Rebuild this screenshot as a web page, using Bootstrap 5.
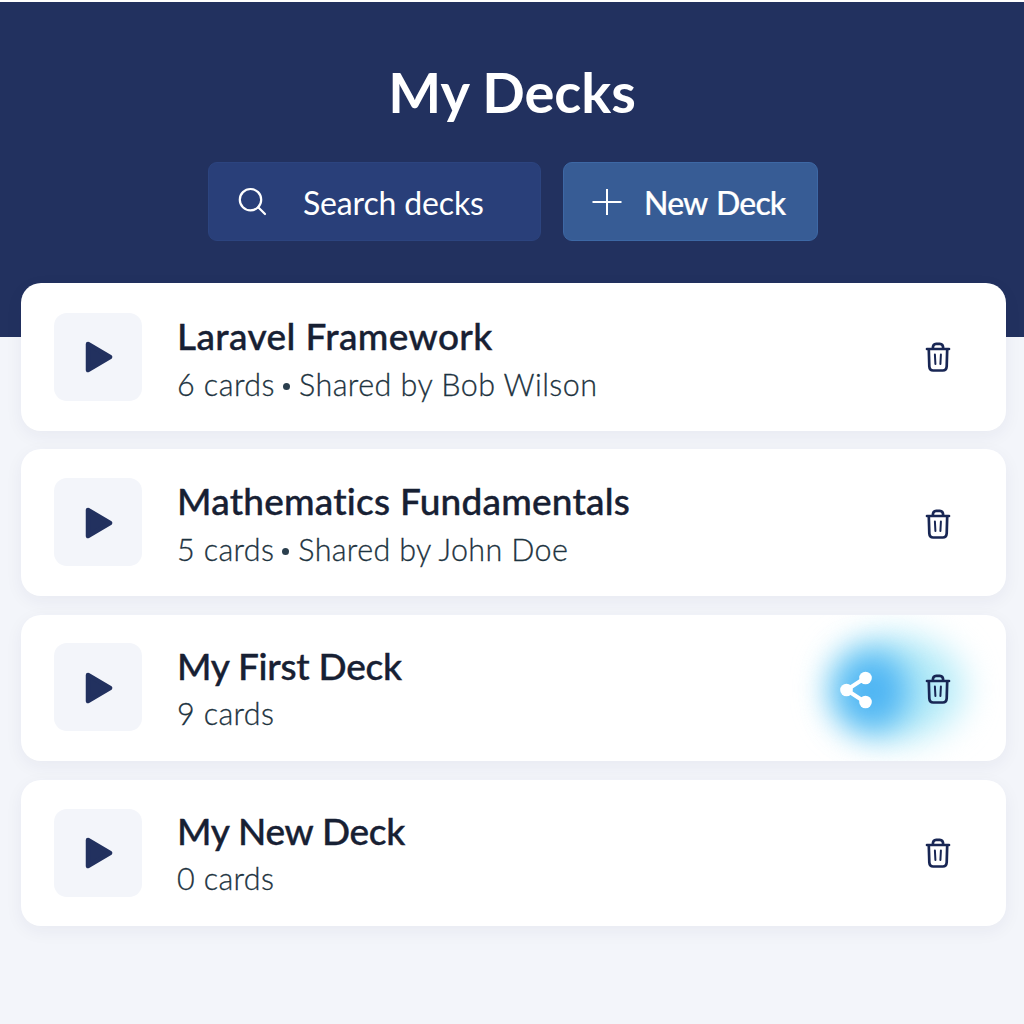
<!DOCTYPE html>
<html lang="en">
<head>
<meta charset="utf-8">
<meta name="viewport" content="width=device-width, initial-scale=1">
<title>My Decks</title>
<link href="https://cdn.jsdelivr.net/npm/bootstrap@5.3.0/dist/css/bootstrap.min.css" rel="stylesheet">
<style>
  body { font-family: Lato, "Open Sans", sans-serif; background: #f3f5fa; min-height: 1024px; overflow: hidden; font-variant-ligatures: none; }
  .deck-header { height: 337px; background: #22315f; border-top: 2px solid #fff; padding-top: 60px; }
  .page-title { font-size: 56px; font-weight: 700; line-height: 60px; margin-bottom: 40px; }
  .tool-row { gap: 22px; padding-left: 2px; }
  .tool-btn { height: 79px; border-radius: 9px; font-size: 32px; line-height: 40px; color: #fff; border: 1px solid transparent; }
  .tool-search { width: 333px; background: #293f79; border-color: #2c447f; padding: 2px 0 0 29px; gap: 35px; letter-spacing: -.15px; }
  .tool-new { width: 255px; background: #375c95; border-color: #3d68a5; padding: 2px 0 0 28px; gap: 22px; font-weight: 500; letter-spacing: -.85px; word-spacing: 2px; -webkit-text-stroke: .2px #fff; }
  .tool-new span { margin-right: -4px; }
  .tool-btn:hover { color: #fff; }
  .tool-btn svg { margin-top: -2px; }
  .deck-list { margin-top: -54px; padding: 0 18px 0 21px; gap: 18px; position: relative; }
  .deck-item { height: 147px; border: 0; border-radius: 20px; padding: 29px 51px 0 33px; box-shadow: 0 5px 18px rgba(40, 45, 90, .055); }
  .deck-item:first-child { height: 148px; padding-top: 30px; }
  .deck-item:nth-child(3) { padding-top: 28px; }
  .deck-item:nth-child(n+3) { height: 146px; margin-top: 1px; }
  .play-tile { width: 88px; height: 88px; border-radius: 13px; background: #f3f5fa; border: 0; padding: 0 0 0 2px; }
  .deck-item:nth-child(2) .play-tile, .deck-item:nth-child(3) .play-tile { padding-top: 2px; }
  .deck-text { margin-left: 35px; margin-top: -1px; }
  .deck-item:nth-child(4) .deck-text { margin-top: -2px; }
  .deck-name { font-size: 37px; font-weight: 500; line-height: 48px; color: #172033; margin: 0; -webkit-text-stroke: .4px #172033; }
  .deck-meta { font-size: 30.5px; font-weight: 300; line-height: 48px; color: #1d3340; margin: 0; letter-spacing: .35px; -webkit-text-stroke: .3px #1d3340; }
  .deck-item:first-child .deck-meta { letter-spacing: .45px; }
  .deck-item:nth-child(n+3) .deck-meta { margin-top: -1px; }
  .n1 { letter-spacing: .4px; }
  .n2 { letter-spacing: .22px; }
  .n3, .n4 { letter-spacing: -.25px; }
  .meta-dot { display: inline-block; width: 7px; height: 7px; border-radius: 50%; background: #2b3f4e; margin: 0 9px 6px 8px; }
  .deck-actions { height: 88px; }
  .deck-item:nth-child(2) .deck-actions, .deck-item:nth-child(3) .deck-actions { padding-top: 3px; }
  .icon-btn { border: 0; background: none; padding: 0; position: relative; }
  .share-btn { width: 34px; height: 38px; margin: 2px 47px 0 0; }
  .icon-btn svg { position: relative; }
  .icon-btn .share-glow { position: absolute; left: -50px; top: -56px; width: 210px; height: 146px; pointer-events: none; }
  svg { display: block; }
</style>
<script src="https://cdn.jsdelivr.net/npm/bootstrap@5.3.0/dist/js/bootstrap.bundle.min.js" defer></script>
</head>
<body>
<svg width="0" height="0" class="position-absolute" aria-hidden="true">
  <defs>
    <filter id="softWide" x="-60%" y="-80%" width="220%" height="260%" color-interpolation-filters="sRGB"><feGaussianBlur stdDeviation="17"/></filter>
    <filter id="softCore" x="-80%" y="-80%" width="260%" height="260%" color-interpolation-filters="sRGB"><feGaussianBlur stdDeviation="16"/></filter>
  </defs>
  <symbol id="play" viewBox="0 0 28 32"><path d="M3 3 25 16 3 29Z" fill="#22315f" stroke="#22315f" stroke-width="4.5" stroke-linejoin="round"/></symbol>
  <symbol id="trash" viewBox="0 0 26 30"><g fill="none" stroke="#182654" stroke-linecap="round" stroke-linejoin="round"><path d="M2 7H24M7.800 6.600C7.800 3.200 9 1.800 11.200 1.800h3.600C17 1.800 18.200 3.200 18.200 6.600M3.800 7.500 4.300 24.300Q4.600 28.500 8.200 28.500H17.800Q21.400 28.500 21.700 24.300L22.200 7.500" stroke-width="2.700"/><path d="M9.900 12.500 10.400 22M15.900 12.500 15.400 22" stroke-width="2"/></g></symbol>
</svg>

<header class="deck-header text-center text-white">
  <h1 class="page-title">My Decks</h1>
  <div class="tool-row d-flex justify-content-center">
    <button class="tool-btn tool-search btn d-flex align-items-center">
      <svg width="30" height="30" viewBox="0 0 30 30" fill="none" stroke="#fff" stroke-width="2.200" stroke-linecap="round"><circle cx="12.500" cy="12.700" r="10.700"/><path d="M20.200 20.200 27 27"/></svg>
      <span>Search decks</span>
    </button>
    <button class="tool-btn tool-new btn d-flex align-items-center">
      <svg width="30" height="28" viewBox="0 0 30 28" stroke="#fff" stroke-width="2"><path d="M.5 14H29.500M15 1V27"/></svg>
      <span>New Deck</span>
    </button>
  </div>
</header>

<main class="deck-list d-flex flex-column">
  <article class="deck-item card flex-row align-items-start">
    <button class="play-tile d-flex align-items-center justify-content-center" aria-label="Play"><svg width="28" height="32"><use href="#play"/></svg></button>
    <div class="deck-text flex-grow-1"><h2 class="deck-name n1">Laravel Framework</h2><p class="deck-meta">6 cards<span class="meta-dot"></span>Shared by Bob Wilson</p></div>
    <div class="deck-actions d-flex align-items-center"><button class="icon-btn p-1" aria-label="Delete"><svg width="26" height="30"><use href="#trash"/></svg></button></div>
  </article>
  <article class="deck-item card flex-row align-items-start">
    <button class="play-tile d-flex align-items-center justify-content-center" aria-label="Play"><svg width="28" height="32"><use href="#play"/></svg></button>
    <div class="deck-text flex-grow-1"><h2 class="deck-name n2">Mathematics Fundamentals</h2><p class="deck-meta">5 cards<span class="meta-dot"></span>Shared by John Doe</p></div>
    <div class="deck-actions d-flex align-items-center"><button class="icon-btn p-1" aria-label="Delete"><svg width="26" height="30"><use href="#trash"/></svg></button></div>
  </article>
  <article class="deck-item card flex-row align-items-start">
    <button class="play-tile d-flex align-items-center justify-content-center" aria-label="Play"><svg width="28" height="32"><use href="#play"/></svg></button>
    <div class="deck-text flex-grow-1"><h2 class="deck-name n3">My First Deck</h2><p class="deck-meta">9 cards</p></div>
    <div class="deck-actions d-flex align-items-center">
      <button class="icon-btn share-btn" aria-label="Share">
        <svg class="share-glow" viewBox="790 616 210 146">
          <ellipse cx="896" cy="689" rx="68" ry="52" fill="#b4ebf8" filter="url(#softWide)"/>
          <ellipse cx="872" cy="692" rx="37" ry="40" fill="#4fb5f3" filter="url(#softCore)"/>
        </svg>
        <svg width="32" height="38" viewBox="0 0 32 38" fill="#fff"><path d="M25 7 6.500 19 25 31" fill="none" stroke="#fff" stroke-width="4"/><circle cx="25.500" cy="7" r="6.300"/><circle cx="6.500" cy="19" r="6.300"/><circle cx="25.500" cy="31" r="6.300"/></svg></button>
      <button class="icon-btn p-1" aria-label="Delete"><svg width="26" height="30"><use href="#trash"/></svg></button>
    </div>
  </article>
  <article class="deck-item card flex-row align-items-start">
    <button class="play-tile d-flex align-items-center justify-content-center" aria-label="Play"><svg width="28" height="32"><use href="#play"/></svg></button>
    <div class="deck-text flex-grow-1"><h2 class="deck-name n4">My New Deck</h2><p class="deck-meta">0 cards</p></div>
    <div class="deck-actions d-flex align-items-center"><button class="icon-btn p-1" aria-label="Delete"><svg width="26" height="30"><use href="#trash"/></svg></button></div>
  </article>
</main>
</body>
</html>
